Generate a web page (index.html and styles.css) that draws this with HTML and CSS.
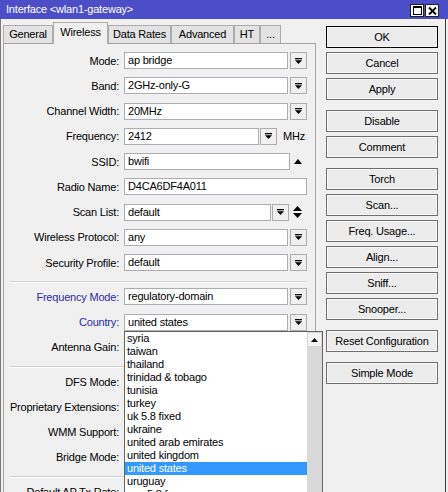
FILE: index.html
```html
<!DOCTYPE html>
<html>
<head>
<meta charset="utf-8">
<title>Interface</title>
<link rel="stylesheet" href="styles.css">
</head>
<body>
<div class="window">
  <div class="titlebar">
    <span class="title">Interface &lt;wlan1-gateway&gt;</span>
    <div class="tbtns">
      <span class="tb"><svg width="9" height="9" viewBox="0 0 9 9"><rect x="0.5" y="0.5" width="8" height="8" fill="none" stroke="#000"/><rect x="0" y="0" width="9" height="2" fill="#000"/></svg></span>
      <span class="tb"><svg width="9" height="8" viewBox="0 0 9 8"><path d="M1 0.5L8 7.5M8 0.5L1 7.5" stroke="#000" stroke-width="1.9"/></svg></span>
    </div>
  </div>
  <div class="main">
    <div class="leftcol">
      <div class="tabs">
        <div class="tab t-general">General</div>
        <div class="tab sel t-wireless">Wireless</div>
        <div class="tab t-rates">Data Rates</div>
        <div class="tab t-adv">Advanced</div>
        <div class="tab t-ht">HT</div>
        <div class="tab t-more">...</div>
      </div>
      <div class="panel">
        <div class="form">
          <div class="row"><div class="lbl">Mode:</div><div class="fld"><div class="inp w-std">ap bridge</div><div class="cbtn"><svg width="7" height="6" viewBox="0 0 7 6"><rect width="7" height="1.3"/><path d="M0 2.3H7L3.5 6Z"/></svg></div></div></div>
          <div class="row"><div class="lbl">Band:</div><div class="fld"><div class="inp w-std">2GHz-only-G</div><div class="cbtn"><svg width="7" height="6" viewBox="0 0 7 6"><rect width="7" height="1.3"/><path d="M0 2.3H7L3.5 6Z"/></svg></div></div></div>
          <div class="row"><div class="lbl">Channel Width:</div><div class="fld"><div class="inp w-std">20MHz</div><div class="cbtn"><svg width="7" height="6" viewBox="0 0 7 6"><rect width="7" height="1.3"/><path d="M0 2.3H7L3.5 6Z"/></svg></div></div></div>
          <div class="row"><div class="lbl">Frequency:</div><div class="fld"><div class="inp w-freq">2412</div><div class="cbtn tight"><svg width="7" height="6" viewBox="0 0 7 6"><rect width="7" height="1.3"/><path d="M0 2.3H7L3.5 6Z"/></svg></div><span class="unit">MHz</span></div></div>
          <div class="row"><div class="lbl">SSID:</div><div class="fld"><div class="inp w-ssid">bwifi</div><span class="tri"><svg width="8" height="5" viewBox="0 0 8 5"><path d="M0 5H8L4 0Z"/></svg></span></div></div>
          <div class="row"><div class="lbl">Radio Name:</div><div class="fld"><div class="inp w-full">D4CA6DF4A011</div></div></div>
          <div class="row"><div class="lbl">Scan List:</div><div class="fld"><div class="inp w-scan">default</div><div class="cbtn tight"><svg width="7" height="6" viewBox="0 0 7 6"><rect width="7" height="1.3"/><path d="M0 2.3H7L3.5 6Z"/></svg></div><span class="updown"><svg width="9" height="12" viewBox="0 0 9 12"><path d="M0 5H9L4.5 0Z M0 7H9L4.5 12Z"/></svg></span></div></div>
          <div class="row"><div class="lbl">Wireless Protocol:</div><div class="fld"><div class="inp w-std">any</div><div class="cbtn"><svg width="7" height="6" viewBox="0 0 7 6"><rect width="7" height="1.3"/><path d="M0 2.3H7L3.5 6Z"/></svg></div></div></div>
          <div class="row"><div class="lbl">Security Profile:</div><div class="fld"><div class="inp w-std">default</div><div class="cbtn"><svg width="7" height="6" viewBox="0 0 7 6"><rect width="7" height="1.3"/><path d="M0 2.3H7L3.5 6Z"/></svg></div></div></div>
          <div class="sep"></div>
          <div class="row"><div class="lbl blue">Frequency Mode:</div><div class="fld"><div class="inp w-std">regulatory-domain</div><div class="cbtn"><svg width="7" height="6" viewBox="0 0 7 6"><rect width="7" height="1.3"/><path d="M0 2.3H7L3.5 6Z"/></svg></div></div></div>
          <div class="row"><div class="lbl blue">Country:</div><div class="fld"><div class="inp w-std">united states</div><div class="cbtn"><svg width="7" height="6" viewBox="0 0 7 6"><rect width="7" height="1.3"/><path d="M0 2.3H7L3.5 6Z"/></svg></div></div></div>
          <div class="row"><div class="lbl">Antenna Gain:</div><div class="fld"><div class="inp w-freq"></div></div></div>
          <div class="sep"></div>
          <div class="row"><div class="lbl">DFS Mode:</div><div class="fld"><div class="inp w-std"></div></div></div>
          <div class="row"><div class="lbl">Proprietary Extensions:</div><div class="fld"><div class="inp w-std"></div></div></div>
          <div class="row"><div class="lbl">WMM Support:</div><div class="fld"><div class="inp w-std"></div></div></div>
          <div class="row"><div class="lbl">Bridge Mode:</div><div class="fld"><div class="inp w-std"></div></div></div>
          <div class="sep"></div>
          <div class="row"><div class="lbl">Default AP Tx Rate:</div><div class="fld"><div class="inp w-std"></div></div></div>
        </div>
      </div>
    </div>
    <div class="rightcol">
      <div class="btn default">OK</div>
      <div class="btn">Cancel</div>
      <div class="btn">Apply</div>
      <div class="btn grp">Disable</div>
      <div class="btn">Comment</div>
      <div class="btn grp">Torch</div>
      <div class="btn">Scan...</div>
      <div class="btn">Freq. Usage...</div>
      <div class="btn">Align...</div>
      <div class="btn">Sniff...</div>
      <div class="btn">Snooper...</div>
      <div class="btn grp">Reset Configuration</div>
      <div class="btn grp">Simple Mode</div>
    </div>
  </div>
  <div class="dropdown">
    <div class="list">
      <div class="item">syria</div>
      <div class="item">taiwan</div>
      <div class="item">thailand</div>
      <div class="item">trinidad &amp; tobago</div>
      <div class="item">tunisia</div>
      <div class="item">turkey</div>
      <div class="item">uk 5.8 fixed</div>
      <div class="item">ukraine</div>
      <div class="item">united arab emirates</div>
      <div class="item">united kingdom</div>
      <div class="item sel">united states</div>
      <div class="item">uruguay</div>
      <div class="item">usa 5.8 fcc</div>
    </div>
    <div class="scroll">
      <div class="sup"><svg width="7" height="4" viewBox="0 0 7 4"><path d="M0 4H7L3.5 0Z"/></svg></div>
    </div>
  </div>
</div>
</body>
</html>
```

FILE: styles.css
```css
* { box-sizing: border-box; }
html, body { margin: 0; padding: 0; }
body {
  width: 448px;
  height: 492px;
  overflow: hidden;
  background: #f0f0f0;
  font-family: "Liberation Sans", Arial, sans-serif;
  font-size: 11px;
  letter-spacing: -0.2px;
  color: #000;
}
svg { display: block; fill: #000; }

.window {
  position: relative;
  width: 448px;
  height: 492px;
  overflow: hidden;
  background: #f0f0f0;
}

.titlebar {
  height: 19px;
  background: #4b4ec6;
  color: #fff;
  display: flex;
  align-items: center;
  padding: 0 9px 0 6px;
}
.title { font-size: 11px; line-height: 19px; }
.tbtns { margin-left: auto; display: flex; gap: 1px; margin-top: 2px; }
.tb {
  width: 14px;
  height: 13px;
  background: #fff;
  border: 1px solid #222;
  display: flex;
  align-items: center;
  justify-content: center;
}

.main {
  display: flex;
  align-items: flex-start;
  width: 446px;
  height: 473px;
  border-left: 1px solid #7a7a7a;
  border-right: 1px solid #3a3a3a;
  padding-left: 2px;
}

.leftcol { width: 313px; }

.tabs {
  margin-top: 3px;
  height: 21px;
  display: flex;
  align-items: flex-end;
}
.tab {
  height: 18px;
  line-height: 17px;
  text-align: center;
  border: 1px solid #acacac;
  border-bottom: none;
  background: #e3e3e3;
}
.tab.sel {
  position: relative;
  z-index: 1;
  height: 22px;
  line-height: 19px;
  margin-bottom: -1px;
  background: #f0f0f0;
}
.t-general { width: 50px; }
.t-wireless { width: 55px; }
.t-rates { width: 63px; }
.t-adv { width: 63px; }
.t-ht { width: 26px; }
.t-more { width: 21px; }

.panel {
  height: 450px;
  border: 1px solid #a3a3a3;
  background: #f0f0f0;
}
.form { padding-top: 4px; }
.row {
  display: grid;
  grid-template-columns: 115px 1fr;
  column-gap: 5px;
  align-items: center;
  height: 25.25px;
}
.lbl {
  display: flex;
  justify-content: flex-end;
  white-space: nowrap;
}
.lbl.blue { color: #2b2ba6; }
.fld { display: flex; align-items: center; }
.inp {
  height: 17px;
  border: 1px solid #abadb3;
  background: #fff;
  padding: 0 3px;
  line-height: 15px;
  white-space: nowrap;
  overflow: hidden;
}
.w-std { width: 164px; }
.w-freq { width: 135px; }
.w-full { width: 183px; }
.w-scan { width: 147px; }
.w-ssid { width: 166px; }
.cbtn {
  width: 17px;
  height: 17px;
  margin-left: 2px;
  border: 1px solid #adadad;
  background: #f0f0f0;
  display: flex;
  align-items: center;
  justify-content: center;
}
.cbtn.tight { margin-left: 1px; }
.unit { margin-left: 6px; }
.tri { margin-left: 4px; }
.updown { margin-left: 4px; }

.sep {
  margin: 6px 8px 1px 6px;
  border-top: 1px solid #d0d0d0;
  border-bottom: 1px solid #fff;
}

.rightcol {
  margin-left: 10px;
  margin-top: 7px;
  width: 112px;
  display: flex;
  flex-direction: column;
  gap: 4px;
}
.btn {
  height: 22px;
  line-height: 20px;
  text-align: center;
  border: 1px solid #707070;
  background: #ececec;
  box-shadow: inset 0 0 0 1px #f7f7f7;
  white-space: nowrap;
}
.btn.default { border-color: #000; }
.btn.grp { margin-top: 6px; }

.dropdown {
  position: absolute;
  left: 124px;
  top: 331px;
  width: 199px;
  height: 170px;
  border: 1px solid #646464;
  background: #fff;
  display: flex;
}
.list { flex: 1; }
.item {
  height: 13px;
  line-height: 13px;
  padding-left: 2px;
  white-space: nowrap;
}
.item.sel { background: #3399ff; color: #fff; }
.scroll { width: 15px; background: #d9d9d9; }
.sup {
  height: 15px;
  background: #f4f4f4;
  border: 1px solid #d4d4d4;
  display: flex;
  align-items: center;
  justify-content: center;
}
```
